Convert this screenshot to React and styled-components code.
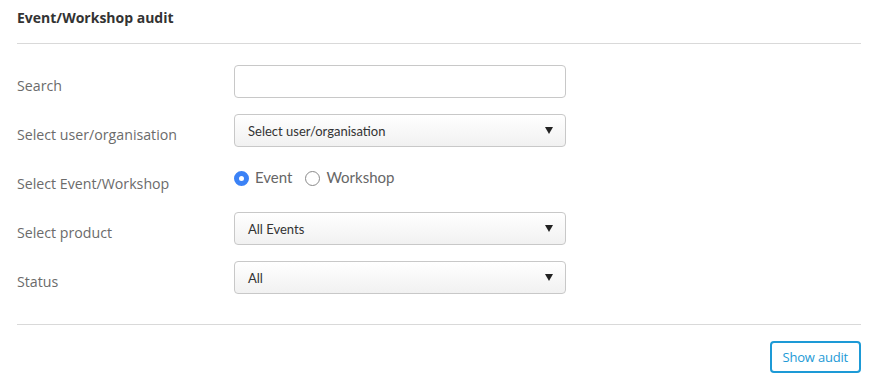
import React, { useState } from "react";
import styled, { createGlobalStyle } from "styled-components";

const GlobalStyle = createGlobalStyle`
  body {
    margin: 0;
    background: #fff;
    font-family: "Open Sans", "Noto Sans", sans-serif;
  }
`;

const Panel = styled.div`
  width: 872px;
  padding: 0 11px 0 17px;
  box-sizing: border-box;
`;

const Title = styled.h2`
  margin: 0;
  height: 43px;
  display: flex;
  align-items: center;
  padding-bottom: 8px;
  box-sizing: border-box;
  font-size: 14px;
  font-weight: 700;
  color: #333;
`;

const Divider = styled.hr`
  margin: 0;
  border: 0;
  border-top: 1px solid #d9d9d9;
`;

const Form = styled.div`
  display: flex;
  flex-direction: column;
  gap: 16px;
  padding: 21px 0 30px;
`;

const Row = styled.div`
  display: grid;
  grid-template-columns: 217px 332px;
  align-items: center;
  height: 33px;
`;

const Label = styled.label`
  font-size: 14.2px;
  color: #6b6b6b;
  padding-top: ${(p) => (p.$offset ? p.$offset : 0)}px;
`;

const TextInput = styled.input`
  height: 33px;
  box-sizing: border-box;
  border: 1px solid #c8c8c8;
  border-radius: 4px;
  background: #fff;
  padding: 0 12px;
  font-size: 13px;
  outline: none;
`;

const SelectBox = styled.div`
  height: 33px;
  box-sizing: border-box;
  border: 1px solid #c8c8c8;
  border-radius: 4px;
  background: linear-gradient(#fff, #f1f1f1);
  display: flex;
  align-items: center;
  justify-content: space-between;
  padding: 0 12px 0 13px;
  font-family: Lato, sans-serif;
  font-size: 13px;
  color: #333;
`;

const Caret = styled.span`
  width: 0;
  height: 0;
  border-left: 4px solid transparent;
  border-right: 4px solid transparent;
  border-top: 7px solid #222;
`;

const RadioGroup = styled.div`
  display: flex;
  align-items: center;
  gap: 13px;
  margin-top: -6px;
`;

const RadioOption = styled.label`
  display: flex;
  align-items: center;
  gap: 6px;
  font-family: Lato, sans-serif;
  font-size: 15px;
  color: #666;
  cursor: pointer;
`;

const RadioDot = styled.span`
  width: 15px;
  height: 15px;
  box-sizing: border-box;
  border-radius: 50%;
  margin-top: 3px;
  border: ${(p) => (p.$checked ? "5px solid #3b82f6" : "1px solid #8a8a8a")};
  background: #fff;
`;

const Footer = styled.div`
  display: flex;
  justify-content: flex-end;
  padding-top: 16px;
`;

const Button = styled.button`
  height: 32px;
  padding: 0 11px;
  border: 2px solid #1d9ad6;
  border-radius: 4px;
  background: #fff;
  color: #1d9ad6;
  font-family: "Open Sans", sans-serif;
  font-size: 13px;
  letter-spacing: -0.2px;
  cursor: pointer;
`;

const Select = ({ value }) => (
  <SelectBox>
    {value}
    <Caret />
  </SelectBox>
);

const App = () => {
  const [type, setType] = useState("event");

  return (
    <Panel>
      <GlobalStyle />
      <Title>Event/Workshop audit</Title>
      <Divider />
      <Form>
        <Row>
          <Label $offset={8}>Search</Label>
          <TextInput />
        </Row>
        <Row>
          <Label $offset={8}>Select user/organisation</Label>
          <Select value="Select user/organisation" />
        </Row>
        <Row>
          <Label $offset={8}>Select Event/Workshop</Label>
          <RadioGroup>
            <RadioOption onClick={() => setType("event")}>
              <RadioDot $checked={type === "event"} />
              Event
            </RadioOption>
            <RadioOption onClick={() => setType("workshop")}>
              <RadioDot $checked={type === "workshop"} />
              Workshop
            </RadioOption>
          </RadioGroup>
        </Row>
        <Row>
          <Label $offset={8}>Select product</Label>
          <Select value="All Events" />
        </Row>
        <Row>
          <Label $offset={8}>Status</Label>
          <Select value="All" />
        </Row>
      </Form>
      <Divider />
      <Footer>
        <Button>Show audit</Button>
      </Footer>
    </Panel>
  );
};

export default App;
